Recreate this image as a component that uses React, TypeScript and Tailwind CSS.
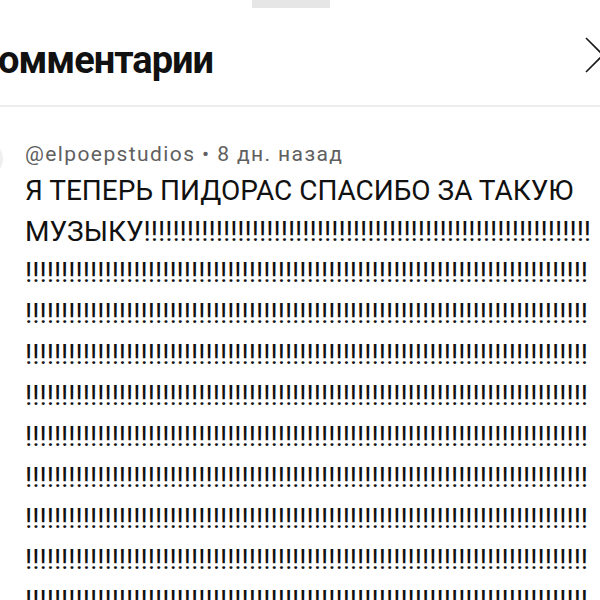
export default function App() {
  const bangs = '!'.repeat(900);

  return (
    <div className="w-[600px] h-[600px] overflow-hidden bg-white font-['Roboto',sans-serif] text-[#111]">
      {/* drag handle */}
      <div className="ml-[252px] w-[78px] h-[8px] bg-[#e6e6e6]" />

      {/* header */}
      <div className="h-[97px] flex items-start justify-between">
        <h1 className="ml-[-25px] mt-[33px] text-[38px] leading-none font-bold tracking-[-1px] whitespace-nowrap">
          Комментарии
        </h1>
        <svg
          className="mr-[-21px] mt-[29px] shrink-0"
          width="36"
          height="36"
          viewBox="0 0 36 36"
          fill="none"
          stroke="#1a1a1a"
          strokeWidth="1.6"
        >
          <path d="M1 1L35 35M35 1L1 35" />
        </svg>
      </div>
      <div className="h-[2px] bg-[#ececec]" />

      {/* comment */}
      <div className="flex pt-[35px] pr-[6px]">
        <div className="shrink-0 w-9 h-9 rounded-full bg-[#efefef] ml-[-33px] mt-[-1px]" />
        <div className="ml-[22px] min-w-0 flex-1">
          <div className="text-[21px] leading-[24px] tracking-[1.4px] text-[#606060] whitespace-nowrap">
            @elpoepstudios • 8 дн. назад
          </div>
          <p className="mt-[4px] text-[28px] leading-[41px] wrap-anywhere">
            Я ТЕПЕРЬ ПИДОРАС СПАСИБО ЗА ТАКУЮ МУЗЫКУ{bangs}
          </p>
        </div>
      </div>
    </div>
  );
}
